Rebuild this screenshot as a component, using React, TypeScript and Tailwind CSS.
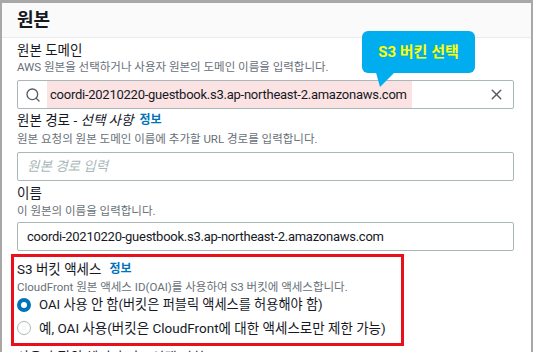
import { Search, X } from "lucide-react";

const font = { fontFamily: 'Roboto, "Noto Sans CJK KR", sans-serif' };

const Label = ({ className = "", children }: { className?: string; children: React.ReactNode }) => (
  <div className={`h-[20px] flex items-center gap-[6px] text-[13.5px] whitespace-nowrap ${className}`}>{children}</div>
);

const Desc = ({ className = "", children }: { className?: string; children: React.ReactNode }) => (
  <div className={`h-[16px] flex items-center text-[11.5px] text-[#687078] whitespace-nowrap ${className}`}>{children}</div>
);

const App = () => {
  return (
    <div
      className="relative w-[533px] h-[352px] overflow-hidden bg-white border-t-[3px] border-l-[2px] border-r-[2px] border-[#a8a8a8] text-[#16191f]"
      style={font}
    >
      {/* Header */}
      <div className="h-[35px] bg-[#fafafa] border-b border-[#eaeded] px-[15px] flex items-center">
        <h2 className="text-[18px] font-bold leading-none">원본</h2>
      </div>

      <div className="pl-[15px] pr-[17px]">
        {/* Origin domain */}
        <Label className="mt-[2px]">원본 도메인</Label>
        <Desc>AWS 원본을 선택하거나 사용자 원본의 도메인 이름을 입력합니다.</Desc>
        <div className="mt-[4px] h-[29px] border border-[#aab7b8] rounded-[2px] flex items-center pl-[7px] pr-[8px]">
          <Search className="w-[16px] h-[16px] text-[#545b64]" strokeWidth={2} />
          <div className="ml-[6px] h-[27px] bg-[#fbe3e3] flex items-center pl-[3px] pr-[5px] text-[13px] tracking-[-0.25px] whitespace-nowrap">
            coordi-20210220-guestbook.s3.ap-northeast-2.amazonaws.com
          </div>
          <div className="flex-1" />
          <X className="w-[17px] h-[17px] text-[#545b64]" strokeWidth={2} />
        </div>

        {/* Origin path */}
        <Label className="mt-[1px]">
          <span>
            원본 경로 - <i>선택 사항</i>
          </span>
          <span className="text-[12px] font-bold text-[#0073bb]">정보</span>
        </Label>
        <Desc className="mt-[2px]">원본 요청의 원본 도메인 이름에 추가할 URL 경로를 입력합니다.</Desc>
        <div className="mt-[4px] h-[29px] border border-[#aab7b8] rounded-[2px] flex items-center pl-[9px] text-[13.5px] italic text-[#aab7b8]">
          원본 경로 입력
        </div>

        {/* Name */}
        <Label className="mt-[2px]">이름</Label>
        <Desc className="mt-[1px]">이 원본의 이름을 입력합니다.</Desc>
        <div className="mt-[2px] h-[29px] border border-[#aab7b8] rounded-[2px] flex items-center pl-[9px] text-[13px] tracking-[-0.25px] whitespace-nowrap">
          coordi-20210220-guestbook.s3.ap-northeast-2.amazonaws.com
        </div>

        {/* S3 bucket access */}
        <Label className="mt-[8px] gap-[8px]">
          <span>S3 버킷 액세스</span>
          <span className="text-[12px] font-bold text-[#0073bb]">정보</span>
        </Label>
        <Desc className="h-[14px] mt-[1px] text-[11.3px]">
          CloudFront 원본 액세스 ID(OAI)를 사용하여 S3 버킷에 액세스합니다.
        </Desc>
        <div className="flex items-center gap-[8px] h-[18px] text-[13.2px] whitespace-nowrap">
          <span className="w-[14px] h-[14px] rounded-full border-[4px] border-[#0073bb] bg-white shrink-0" />
          <span>OAI 사용 안 함(버킷은 퍼블릭 액세스를 허용해야 함)</span>
        </div>
        <div className="mt-[5px] flex items-center gap-[8px] h-[18px] text-[13.5px] whitespace-nowrap">
          <span className="w-[14px] h-[14px] rounded-full border border-[#aab7b8] bg-white shrink-0" />
          <span>예, OAI 사용(버킷은 CloudFront에 대한 액세스로만 제한 가능)</span>
        </div>
        <Label className="mt-[10px]">
          <span>
            사용자 정의 헤더 추가 - <i>선택 사항</i>
          </span>
        </Label>
      </div>

      {/* Annotation: red box */}
      <div className="absolute left-[9px] top-[251px] w-[393px] h-[92px] border-[3px] border-[#e8111b]" />

      {/* Annotation: callout */}
      <div className="absolute left-[360px] top-[28px] w-[113px] h-[42px] rounded-[6px] bg-[#00aeef] flex items-center justify-center">
        <span className="text-[15px] font-bold text-[#ffff00] whitespace-nowrap">S3 버킨 선택</span>
      </div>
      <svg className="absolute left-[370px] top-[66px]" width="30" height="22" viewBox="0 0 30 22">
        <polygon points="3,0 26,0 8,18" fill="#00aeef" />
      </svg>
    </div>
  );
};

export default App;
